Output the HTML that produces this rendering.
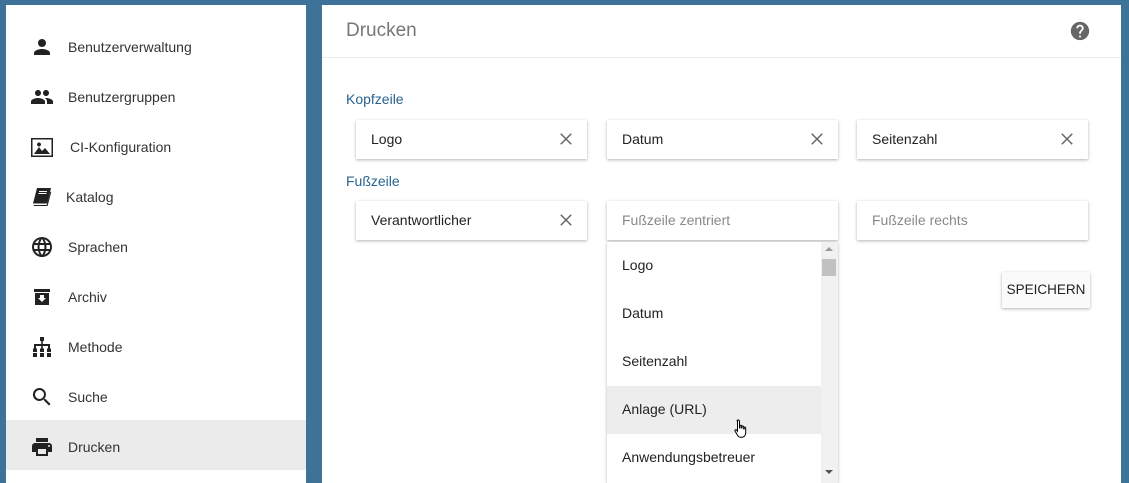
<!DOCTYPE html>
<html><head><meta charset="utf-8"><style>
*{box-sizing:border-box;margin:0;padding:0}
body{width:1129px;height:483px;background:#3e7399;font-family:"Liberation Sans",sans-serif;position:relative;overflow:hidden;color:#222}
#side{position:absolute;left:6px;top:5px;width:300px;height:478px;background:#fff}
.it{position:absolute;left:0;width:300px;height:50px;font-size:14px;color:#333}
.it span{position:absolute;left:62px;top:17px}
.it svg{position:absolute;left:24px;top:13px;width:24px;height:24px;fill:#222}
.it.sel{background:#ebebeb}
#main{position:absolute;left:322px;top:5px;width:799px;height:478px;background:#fff}
#hdr{height:53px;border-bottom:1px solid #ececec;position:relative}
#hdr .t{position:absolute;left:24px;top:15px;font-size:19px;color:#777}
.lbl{position:absolute;left:24px;font-size:14px;color:#27638f}
.f{position:absolute;width:231px;height:39px;background:#fff;box-shadow:0 1px 3px rgba(0,0,0,.3);font-size:14px}
.f span{position:absolute;left:15px;top:11px}
.f .x{position:absolute;right:12px;top:10px;width:18px;height:18px}
.ph{color:#888}
#dd{position:absolute;left:285px;top:237px;width:231px;height:241px;background:#fff;box-shadow:0 1px 3px rgba(0,0,0,.3);overflow:hidden}
.o{position:absolute;left:0;width:214px;height:48px;font-size:14px}
.o span{position:absolute;left:15px;top:15px}
#sb{position:absolute;right:0;top:0;width:17px;height:241px;background:#f1f1f1}
#btn{position:absolute;left:680px;top:267px;width:88px;height:36px;background:#fafafa;box-shadow:0 1px 3px rgba(0,0,0,.3);font-size:13.5px;text-align:center;line-height:36px;color:#222}
</style></head><body>
<div id="side">
<div class="it" style="top:17px"><svg viewBox="0 0 24 24"><path d="M12 12c2.2 0 4-1.8 4-4s-1.8-4-4-4-4 1.8-4 4 1.8 4 4 4zm0 2c-2.7 0-8 1.3-8 4v2h16v-2c0-2.7-5.3-4-8-4z"/></svg><span>Benutzerverwaltung</span></div>
<div class="it" style="top:67px"><svg viewBox="0 0 24 24"><path d="M16 11c1.7 0 3-1.3 3-3s-1.3-3-3-3-3 1.3-3 3 1.3 3 3 3zm-8 0c1.7 0 3-1.3 3-3S9.7 5 8 5 5 6.3 5 8s1.3 3 3 3zm0 2c-2.3 0-7 1.2-7 3.5V19h14v-2.5c0-2.3-4.7-3.5-7-3.5zm8 0c-.3 0-.6 0-1 .1 1.2.8 2 2 2 3.4V19h6v-2.5c0-2.3-4.7-3.5-7-3.5z"/></svg><span>Benutzergruppen</span></div>
<div class="it" style="top:117px"><svg viewBox="0 0 24 24"><path d="M1 3h22v19H1zM2.5 4.5v16h19v-16zM4 19l5-7 3 4 3-3 5 6zM7 9.5a2 2 0 1 0 0-.1z"/></svg><span style="left:64px">CI-Konfiguration</span></div>
<div class="it" style="top:167px"><svg viewBox="0 0 24 24"><path d="M7 3h14l-3.8 15.5H3z"/><path d="M20.3 6.5l.9.6L17.6 21H3.6l.3-1h12.8z"/><path d="M9 6.5h8M8.5 8.5h8" stroke="#fff" stroke-width="1"/></svg><span style="left:60px">Katalog</span></div>
<div class="it" style="top:217px"><svg viewBox="0 0 24 24"><path d="M12 2a10 10 0 1 0 0 20 10 10 0 0 0 0-20zm6.9 6h-3a15 15 0 0 0-1.4-3.6A8 8 0 0 1 18.9 8zM12 4c.8 1.2 1.5 2.5 1.9 4h-3.8c.4-1.4 1.1-2.8 1.9-4zM4.3 14a8 8 0 0 1 0-4h3.4a16 16 0 0 0 0 4zm.8 2h3a15 15 0 0 0 1.4 3.6A8 8 0 0 1 5.1 16zm3-8h-3a8 8 0 0 1 4.3-3.6C8.8 5.6 8.4 6.8 8.1 8zM12 20c-.8-1.2-1.5-2.5-1.9-4h3.8c-.4 1.4-1.1 2.8-1.9 4zm2.3-6H9.7a14 14 0 0 1 0-4h4.6a14 14 0 0 1 0 4zm.3 5.6c.6-1.1 1.1-2.3 1.4-3.6h3a8 8 0 0 1-4.4 3.6zm1.8-5.6a16 16 0 0 0 0-4h3.4a8 8 0 0 1 0 4z"/></svg><span>Sprachen</span></div>
<div class="it" style="top:267px"><svg viewBox="0 0 24 24"><path d="M4 4h16v3H4zM5 8h14v12H5z"/><path d="M10 10h4v3h2l-4 4-4-4h2z" fill="#fff"/></svg><span>Archiv</span></div>
<div class="it" style="top:317px"><svg viewBox="0 0 24 24"><path d="M10 2h4v4h-1.2v3H20v4.5h1V17h-4v-3.5h1V11h-5.2v2.5H14V17h-4v-3.5h1.2V11H6v2.5h1V17H3v-3.5h1V9h7.2V6H10z"/><path d="M3 18h4v4H3zm7 0h4v4h-4zm7 0h4v4h-4z"/></svg><span>Methode</span></div>
<div class="it" style="top:367px"><svg viewBox="0 0 24 24"><path d="M15.5 14h-.8l-.3-.3A6.5 6.5 0 1 0 9.5 16a6.5 6.5 0 0 0 4.2-1.6l.3.3v.8l5 5 1.5-1.5zm-6 0a4.5 4.5 0 1 1 0-9 4.5 4.5 0 0 1 0 9z"/></svg><span>Suche</span></div>
<div class="it sel" style="top:415px"><svg viewBox="0 0 24 24" style="top:15px"><path d="M19 8H5a3 3 0 0 0-3 3v6h4v4h12v-4h4v-6a3 3 0 0 0-3-3zm-3 11H8v-5h8zm3-7a1 1 0 1 1 0-2 1 1 0 0 1 0 2zM18 3H6v4h12z"/></svg><span style="top:19px">Drucken</span></div>
</div>
<div id="main">
<div id="hdr"><div class="t">Drucken</div>
<svg style="position:absolute;left:747px;top:15px" width="22" height="22" viewBox="0 0 24 24"><path fill="#666" d="M12 2a10 10 0 1 0 0 20 10 10 0 0 0 0-20zm1 17h-2v-2h2zm2.1-7.8-.9.9c-.7.7-1.2 1.4-1.2 2.9h-2v-.5c0-1.1.4-2.1 1.2-2.8l1.2-1.3A2 2 0 0 0 12 7a2 2 0 0 0-2 2H8a4 4 0 0 1 8 0c0 .9-.4 1.7-.9 2.2z"/></svg></div>
<div class="lbl" style="top:86px">Kopfzeile</div>
<div class="f" style="left:34px;top:115px"><span>Logo</span><svg class="x" viewBox="0 0 24 24"><path d="M5 5l14 14M19 5L5 19" stroke="#666" stroke-width="2"/></svg></div>
<div class="f" style="left:285px;top:115px"><span>Datum</span><svg class="x" viewBox="0 0 24 24"><path d="M5 5l14 14M19 5L5 19" stroke="#666" stroke-width="2"/></svg></div>
<div class="f" style="left:535px;top:115px"><span>Seitenzahl</span><svg class="x" viewBox="0 0 24 24"><path d="M5 5l14 14M19 5L5 19" stroke="#666" stroke-width="2"/></svg></div>
<div class="lbl" style="top:168px">Fußzeile</div>
<div class="f" style="left:34px;top:196px"><span>Verantwortlicher</span><svg class="x" viewBox="0 0 24 24"><path d="M5 5l14 14M19 5L5 19" stroke="#666" stroke-width="2"/></svg></div>
<div class="f" style="left:285px;top:196px"><span class="ph">Fußzeile zentriert</span></div>
<div class="f" style="left:535px;top:196px"><span class="ph">Fußzeile rechts</span></div>
<div id="btn">SPEICHERN</div>
<div id="dd">
<div class="o" style="top:0"><span>Logo</span></div>
<div class="o" style="top:48px"><span>Datum</span></div>
<div class="o" style="top:96px"><span>Seitenzahl</span></div>
<div class="o" style="top:144px;background:#ededed"><span>Anlage (URL)</span></div>
<div class="o" style="top:192px"><span>Anwendungsbetreuer</span></div>
<div id="sb"><div style="position:absolute;left:4px;top:5px;border:4px solid transparent;border-bottom:4px solid #999;border-top:0;width:0"></div>
<div style="position:absolute;left:1px;top:17px;width:14px;height:17px;background:#c1c1c1"></div>
<div style="position:absolute;left:4px;top:228px;border:4px solid transparent;border-top:4px solid #555;border-bottom:0;width:0"></div></div>
</div>
<svg style="position:absolute;left:411px;top:413px" width="18" height="24" viewBox="0 0 18 24"><path d="M5 2c.8 0 1.5.6 1.5 1.4V10l.5-.1V8c0-.8 1.2-1 1.6-.3V10h.5V8.6c0-.8 1.3-.9 1.6 0V11h.5V9.6c.4-.8 1.5-.6 1.5.2v5c0 2.5-1.5 4.5-4 4.5H7.5c-1.3 0-2.3-.8-3-2L2 13c-.5-.9.7-1.8 1.5-1l1 1.2V3.4C3.5 2.6 4.2 2 5 2z" fill="#fff" stroke="#000" stroke-width="1"/></svg>
</div>
</body></html>
